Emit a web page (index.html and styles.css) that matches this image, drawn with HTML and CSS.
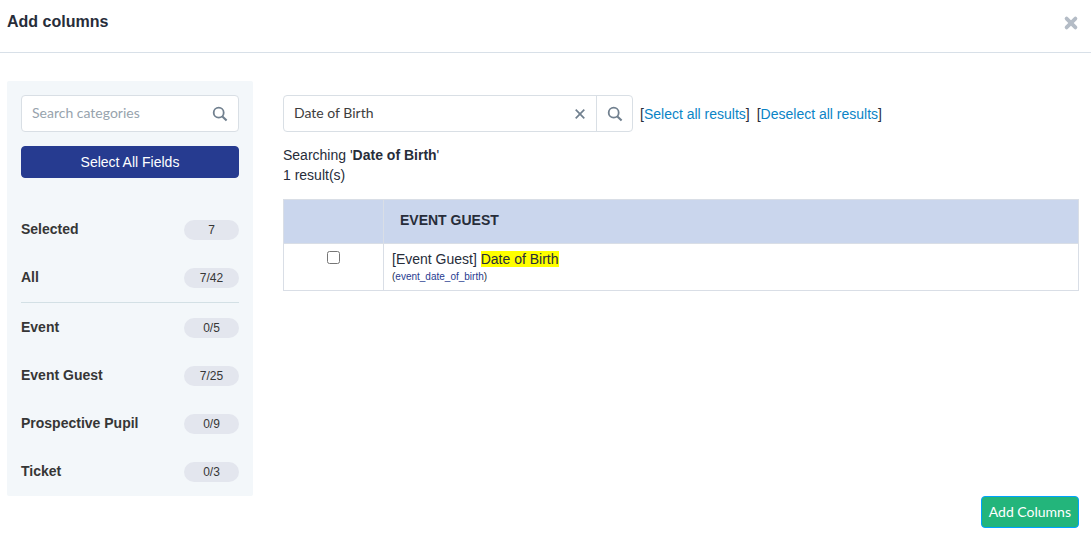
FILE: index.html
```html
<!DOCTYPE html>
<html lang="en">
<head>
    <meta charset="UTF-8">
    <meta name="viewport" content="width=device-width, initial-scale=1.0">
    <title>Add columns</title>
    <link rel="stylesheet" href="styles.css">
</head>
<body>
    <header class="modal-header">
        <h1>Add columns</h1>
        <button type="button" class="close" aria-label="Close">
            <svg width="16" height="16" viewBox="0 0 16 16"><path d="M3.6 3.6l8.8 8.8M12.4 3.6l-8.8 8.8" stroke="#b4bcc6" stroke-width="3.8" stroke-linecap="round"/></svg>
        </button>
    </header>

    <main class="modal-body">
        <aside class="sidebar">
            <div class="search-box">
                <input type="text" placeholder="Search categories" aria-label="Search categories">
                <button type="button" class="icon-btn" aria-label="Search">
                    <svg width="16" height="16" viewBox="0 0 16 16" fill="none" stroke="#71808f" stroke-width="1.8"><circle cx="6.7" cy="6.7" r="5"/><path d="M10.4 10.4l4.2 4.2" stroke-width="2.1"/></svg>
                </button>
            </div>
            <button type="button" class="btn btn-primary">Select All Fields</button>

            <ul class="categories">
                <li><span class="name">Selected</span><span class="count">7</span></li>
                <li><span class="name">All</span><span class="count">7/42</span></li>
            </ul>
            <ul class="categories groups">
                <li><span class="name">Event</span><span class="count">0/5</span></li>
                <li><span class="name">Event Guest</span><span class="count">7/25</span></li>
                <li><span class="name">Prospective Pupil</span><span class="count">0/9</span></li>
                <li><span class="name">Ticket</span><span class="count">0/3</span></li>
            </ul>
        </aside>

        <section class="results">
            <div class="toolbar">
                <div class="search-box search-fields">
                    <input type="text" value="Date of Birth" aria-label="Search fields">
                    <button type="button" class="icon-btn clear" aria-label="Clear">
                        <svg width="12" height="12" viewBox="0 0 12 12"><path d="M1.7 1.7l8.6 8.6M10.3 1.7l-8.6 8.6" stroke="#71808f" stroke-width="1.7"/></svg>
                    </button>
                    <button type="button" class="icon-btn split" aria-label="Search">
                        <svg width="16" height="16" viewBox="0 0 16 16" fill="none" stroke="#71808f" stroke-width="1.8"><circle cx="6.7" cy="6.7" r="5"/><path d="M10.4 10.4l4.2 4.2" stroke-width="2.1"/></svg>
                    </button>
                </div>
                <span>[<a href="#">Select all results</a>]</span>
                <span>[<a href="#">Deselect all results</a>]</span>
            </div>

            <p class="summary">Searching '<strong>Date of Birth</strong>'<br>1 result(s)</p>

            <table>
                <thead>
                    <tr>
                        <th class="check"></th>
                        <th>EVENT GUEST</th>
                    </tr>
                </thead>
                <tbody>
                    <tr>
                        <td class="check"><input type="checkbox" id="dob"></td>
                        <td>
                            <label for="dob">[Event Guest] <mark>Date of Birth</mark></label>
                            <small>(<span>event_date_of_birth</span>)</small>
                        </td>
                    </tr>
                </tbody>
            </table>
        </section>
    </main>

    <footer class="modal-footer">
        <button type="button" class="btn btn-success">Add Columns</button>
    </footer>
</body>
</html>
```
FILE: styles.css
```css
* {
    box-sizing: border-box;
}

body {
    margin: 0;
    font-family: "Liberation Sans", Arial, sans-serif;
    font-size: 14px;
    line-height: 20px;
    color: #272d3a;
    background: #fff;
}

button,
input {
    font: inherit;
    color: inherit;
}

button {
    cursor: pointer;
}

a {
    color: #0a84c6;
    text-decoration: none;
}

.modal-header {
    display: flex;
    justify-content: space-between;
    align-items: center;
    height: 53px;
    padding: 0 12px 8px 7px;
    border-bottom: 1px solid #d8e0e8;
}

.modal-header h1 {
    margin: 0;
    font-size: 16px;
}

.close {
    display: flex;
    padding: 2px 0 0;
    border: 0;
    background: none;
}

.modal-body {
    display: flex;
    gap: 30px;
    padding: 28px 12px 0 7px;
}

.sidebar {
    flex: 0 0 246px;
    min-width: 0;
    padding: 14px 14px 0;
    background: #f3f7fa;
    border-radius: 2px;
}

.search-box {
    display: flex;
    height: 37px;
    background: #fff;
    border: 1px solid #d9dfe5;
    border-radius: 4px;
    overflow: hidden;
}

.search-box input {
    flex: 1;
    min-width: 0;
    padding: 0 10px 1px;
    border: 0;
    outline: 0;
    background: none;
    font-family: Lato, sans-serif;
    color: #3d3d3d;
}

.search-box input::placeholder {
    color: #97a3ad;
    opacity: 1;
}

.icon-btn {
    display: flex;
    align-items: center;
    justify-content: center;
    width: 36px;
    padding: 0;
    border: 0;
    background: none;
}

.icon-btn.clear {
    width: 32px;
}

.icon-btn.split {
    border-left: 1px solid #d9dfe5;
}

.btn {
    height: 32px;
    padding: 0 7px;
    border: 1px solid;
    border-radius: 4px;
    color: #fff;
}

.btn-primary {
    width: 100%;
    margin: 14px 0 28px;
    background: #263b90;
    border-color: #263b90;
}

.btn-success {
    background: #23b57b;
    border-color: #00a2ff;
    font-family: Lato, sans-serif;
}

.categories {
    margin: 0;
    padding: 0;
    list-style: none;
}

.categories li {
    display: flex;
    justify-content: space-between;
    align-items: center;
    height: 48px;
    font-weight: bold;
    color: #363636;
}

.name {
    padding-bottom: 2px;
}

.groups {
    padding-top: 1px;
    border-top: 1px solid #d3e0e5;
}

.count {
    width: 55px;
    border-radius: 10px;
    background: #e3e6ee;
    font-size: 12px;
    font-weight: normal;
    text-align: center;
}

.results {
    flex: 1;
    min-width: 0;
    padding-top: 14px;
}

.toolbar {
    display: flex;
    align-items: center;
    gap: 7px;
}

.search-fields {
    width: 350px;
}

.summary {
    margin: 13px 0 14px;
}

table {
    width: 100%;
    border-collapse: collapse;
}

th,
td {
    border: 1px solid #d9dee6;
    text-align: left;
    vertical-align: top;
}

th {
    height: 44px;
    padding: 10px 16px;
    background: #cad6ed;
}

td {
    padding: 5px 8px 6px;
}

.check {
    width: 100px;
    text-align: center;
}

.check input {
    margin: 2px 3px;
    vertical-align: top;
}

mark {
    background: #ff0;
    color: inherit;
}

label,
small {
    display: block;
}

small {
    font-size: 10px;
    line-height: 15px;
}

small span {
    color: #263b90;
}

.modal-footer {
    display: flex;
    justify-content: flex-end;
    padding: 0 12px 6px;
}
```
